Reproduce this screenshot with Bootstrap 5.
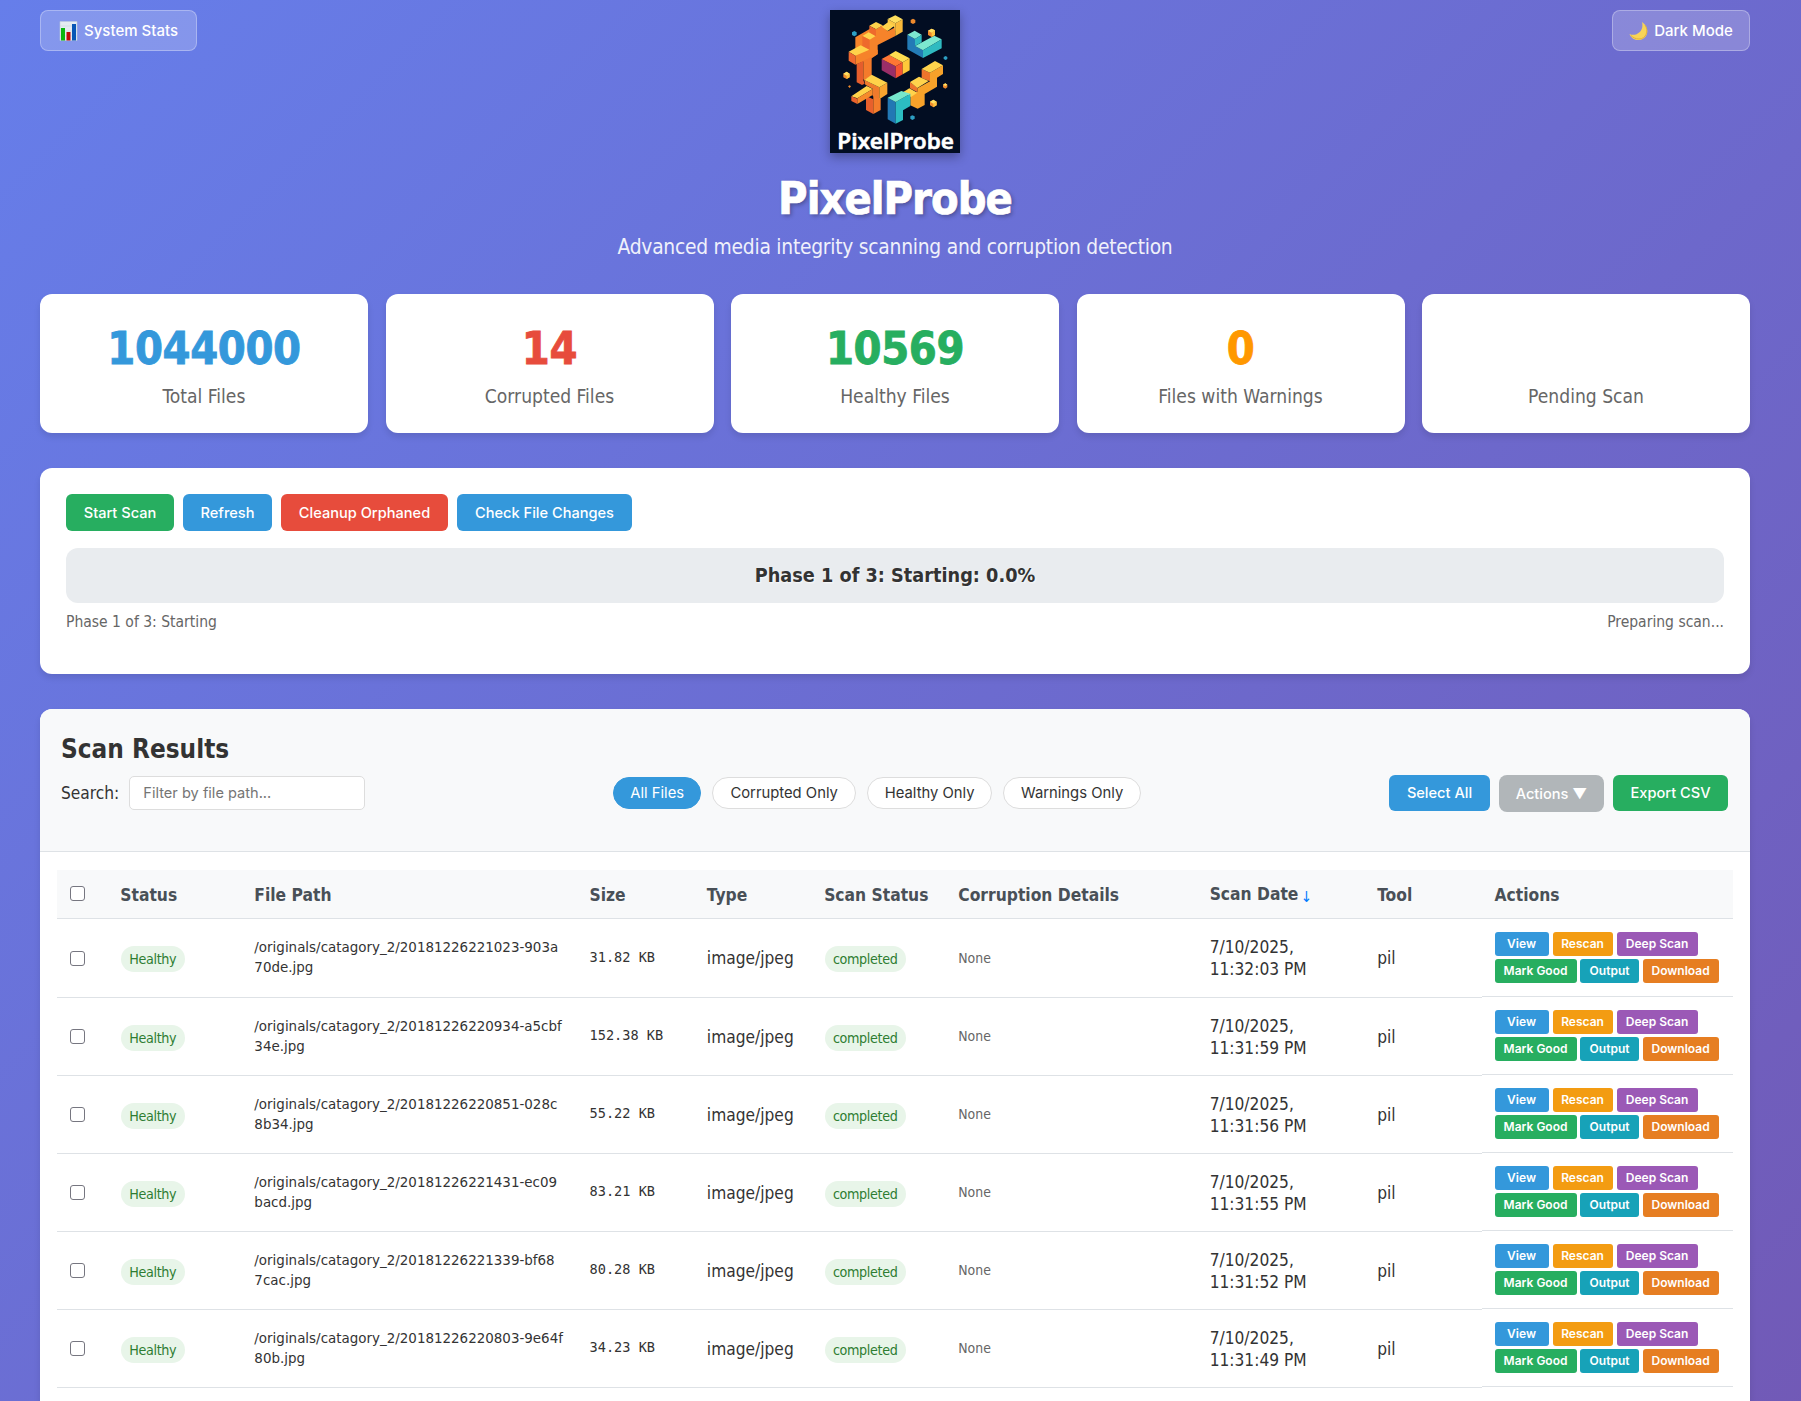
<!DOCTYPE html>
<html lang="en">
<head>
<meta charset="utf-8">
<title>PixelProbe</title>
<meta name="viewport" content="width=device-width, initial-scale=1">
<link href="https://cdn.jsdelivr.net/npm/bootstrap@5.3.0/dist/css/bootstrap.min.css" rel="stylesheet">
<style>
:root{--ui:Inter,"Liberation Sans",sans-serif;--txt:"DejaVu Sans Condensed","DejaVu Sans",sans-serif}
html,body{height:1401px;overflow:hidden}
body{font-family:var(--txt);font-stretch:condensed;font-size:17.2px;line-height:22px;color:#333;background:linear-gradient(135deg,#667eea 0%,#764ba2 100%) no-repeat;background-size:1801px 2700px}
.page{width:1710px;margin-left:40px}
.top-bar{padding-top:10px}
.side{width:400px}
.btn{font-family:var(--ui);font-weight:500;font-size:14.6px;line-height:20px;border:0;color:#fff!important;white-space:nowrap;padding:0}
.glass{height:41px;border:1px solid rgba(255,255,255,.3);background:rgba(255,255,255,.2);border-radius:8px;font-size:15px}
.glass svg{width:19px;height:20px;margin-right:6px}
.logo{width:130px;height:143px;box-shadow:0 4px 10px rgba(0,0,0,.3);display:block;overflow:visible}
.title{font-size:44.8px;font-weight:700;line-height:50px;letter-spacing:-1px;text-shadow:2px 2px 4px rgba(0,0,0,.3);margin:21px 0 0;-webkit-text-stroke:.7px #fff}
.sub{font-size:20.8px;line-height:28px;letter-spacing:-.25px;opacity:.9;margin:9px 0 0}
.panel{background:#fff;border:0;border-radius:12px;box-shadow:0 4px 6px rgba(0,0,0,.1)}
.stats{gap:17.5px;margin-top:33px}
.stat{flex:1 1 0;height:139px}
.num{font-size:44.8px;font-weight:700;line-height:54px;height:54px;margin-top:28px;letter-spacing:-.4px;-webkit-text-stroke:.8px currentColor}
.lbl{font-size:19.1px;color:#666;line-height:24px;margin-top:9px}
.controls{margin-top:35px;height:206px;padding:26px}
.act{height:37px;border-radius:6px}
.b-blue{background:#3498db!important}.b-green{background:#27ae60!important}.b-red{background:#e74c3c!important}.b-gray{background:#b1b6b9!important}
.b-orange{background:#f39c12!important}.b-purple{background:#9b59b6!important}.b-teal{background:#17a2b8!important}.b-dark{background:#e67e22!important}
.bar{height:55px;border-radius:12px;background:#e9ecef;margin-top:17px;font-size:19.7px;font-weight:700;text-shadow:1px 1px 2px rgba(255,255,255,.8)}
.phase{font-size:15.5px;color:#666;margin-top:8px}
.results{margin-top:35px;height:760px;overflow:hidden}
.rhead{height:143px;background:#f8f9fa;border-bottom:1px solid #dee2e6;padding:24px 22px 0 21px}
.rhead h2{font-size:25.9px;font-weight:700;line-height:32px;margin:0}
.tools{height:37px;margin-top:10px}
.find{width:236px;height:34px;margin-left:10px;font-family:var(--ui);font-size:14.6px;border:1px solid #ddd;border-radius:5px;padding:0 13px;color:#333}
.find::placeholder{color:#757575}
.lift{margin-bottom:2px}
.pill{height:32px;border-radius:16px;border:1px solid #ddd!important;background:#fff;color:#333!important;font-weight:400;font-size:14.8px}
.pill.on{background:#3498db;border-color:#3498db!important;color:#fff!important}
.grid{width:1676px;table-layout:fixed;margin:18px 0 0 17px;border-collapse:separate;border-spacing:0}
.grid th{height:49px;background:#f8f9fa;color:#495057;padding:1px 0 0 13px;border-bottom:1px solid #dee2e6;font-weight:700;white-space:nowrap;font-size:17.3px}
.grid th:first-child{padding:0 0 1px 13px}
.grid td{height:78px;padding:0 0 0 13px;border-bottom:1px solid #dee2e6;vertical-align:middle}
.grid tr:first-child td{height:79px}
.grid td.last,.grid tr:first-child td.last{padding:12px 0 0 13px;height:77px;vertical-align:top;display:block;margin-bottom:1px}
.grid tr:first-child td.last{padding-top:13px;height:78px}
.grid input{appearance:none;width:15px;height:15px;border:1px solid #767680;border-radius:3px;background:#fff;display:block;margin:0}
.arrow{color:#007bff;font-size:15px;font-weight:400;margin-left:-3px;display:inline-block;transform:translateY(2px)}
.tag{display:inline-block;height:26px;line-height:27px;border-radius:13px;background:#e8f5e9;color:#2e7d32;font-size:14.2px;letter-spacing:-.35px;text-align:center;margin-top:2px;margin-left:.5px;vertical-align:middle}
.grid .path{font-size:14.95px;line-height:20px;padding-bottom:2px}
.grid .size{font-family:"DejaVu Sans Mono",monospace;font-size:13.6px;padding-bottom:3px}
.grid .none{font-size:13.9px;color:#666;padding-bottom:1px}
.mini{height:24px;font-size:12px;font-weight:600;border-radius:3px;line-height:24px}
</style>
</head>
<body>
<div class="page">
 <header class="top-bar d-flex justify-content-between align-items-start">
  <div class="side"><button class="btn glass d-inline-flex align-items-center justify-content-center" style="width:157px"><svg viewBox="0 0 19 20"><path fill="#e4ebf2" stroke="#bccbdc" stroke-width=".6" d="M1 .5h17v19H1z"/><path stroke="#c5d2de" stroke-width=".5" d="M1 5h17M1 10h17M1 15h17"/><path fill="#0ab511" d="M2 7h4v12.5H2z"/><path fill="#c1090c" d="M7.500 11h4v8.500h-4z"/><path fill="#0756b5" d="M13 3h4v16.500h-4z"/></svg>System Stats</button></div>
  <svg class="logo" viewBox="0 0 390 429">
   <path fill="#020d22" d="M0 0h390v429H0z"/>
   <g transform="translate(-30 -30)">
    <!-- upper left arm -->
    <path fill="#f6832a" d="M168 88l19-12 16 18 23-12v26l-53 27v27l-18 11-49-6v-55l43-25z"/>
    <path fill="#f9b93a" d="M226 70l22-12v37l-22 13z"/>
    <path fill="#ffdf5e" d="M203 57l23-11 22 12-22 12z"/>
    <path fill="#fbc845" d="M203 57l23 13v24l-4-14-19-12z"/>
    <path fill="#ffd34c" d="M185 80l20-14 18 11-20 16zM148 77l20-11 20 10-20 12zM127 108l19-11 21 11-18 11z"/>
    <path fill="#ee6a2c" d="M148 77l20 11v21l-20-12zM127 108l22 11v32l-22-13z"/>
    <path fill="#f6832a" d="M106 167l42-18h25v14l-18 12-49 19z"/>
    <path fill="#ffd24a" d="M86 155l36-19 26 13-42 18z"/>
    <path fill="#ee6830" d="M86 155l20 12v27l-20-12z"/>
    <path fill="#e55d2c" d="M110 192l20-9v58l4 10-8 4-16-8z"/>
    <path fill="#f47b2b" d="M130 182l25-12v57l-22 14-3-4z"/>
    <!-- lower left arm -->
    <path fill="#e8602c" d="M138 288l22 10v44l-22-12z"/>
    <path fill="#f47d2b" d="M160 286l22 10v34l-22 12z"/>
    <path fill="#ef7a2c" d="M133 240l45 22v36l-20-10v-22l-22-12z"/>
    <path fill="#f9a52f" d="M178 262l24-14v34l-24 16z"/>
    <path fill="#ffd24a" d="M133 240l22-16 47 24-24 14zM94 289l46-31 18 9-46 28z"/>
    <path fill="#f68a2b" d="M112 295l46-28v18l-46 27z"/>
    <path fill="#ea622c" d="M94 289l18 7v16l-18-9z"/>
    <!-- centre cube -->
    <path fill="#9a2e68" d="M185 177l42 22v36l-42-24z"/>
    <path fill="#ff7634" d="M185 177l22-12 41 22-21 12z"/>
    <path fill="#ffdd50" d="M207 165l20-12 42 22-21 12z"/>
    <path fill="#f75432" d="M227 199l21-12v36l-21 12z"/>
    <path fill="#ffc93a" d="M248 187l21-12v36l-21 12z"/>
    <!-- teal blocks -->
    <path fill="#237bb6" d="M262 104l23 13v21l24 13v23l-47-26z"/>
    <path fill="#7ce8cf" d="M262 104l22-12 21 12-20 13zM285 138l58-31 22 11-56 33z"/>
    <path fill="#2fbac0" d="M285 117l20-13v23l-20 11zM309 151l56-33v27l-56 29z"/>
    <!-- lower right arm -->
    <path fill="#f7a22a" d="M330 218l39-22v26l-18 11v27l-37 22v33l-21 11-22-10v-28l21-13v-10l38-21z"/>
    <path fill="#ed742c" d="M305 207l25 11v26l-25-10zM270 246l22 17v14l-22-12z"/>
    <path fill="#ffd34c" d="M305 207l40-24 24 13-39 22zM270 246l27-16 29 13-34 21zM250 276l18-11 24 13-19 13z"/>
    <path fill="#2278b4" d="M203 293l24 13v65l-24-13z"/>
    <path fill="#2cbdc2" d="M227 306l44-25v37l-22 13v29l-22 11z"/>
    <path fill="#77e7cc" d="M203 293l41-20 27 8-44 25z"/>
    <!-- loose cubes -->
    <path fill="#ef8a2d" d="M272 60l7-4 7 4v8l-7 4-7-4zM324 92l11-6 10 5v14l-10 6-11-6zM70 221l10-6 9 6v11l-9 5-10-5zM330 305l10-6 10 6v11l-10 6-10-6zM369 254l7-4 6 4v8l-6 4-7-4zM84 259l5-3 4 3-4 5z"/>
    <path fill="#ffc53e" d="M335 98l10-7v14l-10 6zM80 227l9-6v11l-9 5zM340 311l10-6v11l-10 6z"/>
    <path fill="#2d9fc4" d="M96 97l7-4 7 4v8l-7 4-7-4zM371 171l6-3 5 3v6l-5 3-6-3zM271 349l6-3 7 3v7l-7 4-6-4z"/>
    <path fill="#ffe063" d="M324 92l11-6 10 5-10 7zM70 221l10-6 9 6-9 6zM330 305l10-6 10 6-10 6zM369 254l7-4 6 4-6 4z"/>
   </g>
   <text x="197" y="417" text-anchor="middle" textLength="350" lengthAdjust="spacingAndGlyphs" fill="#fff" stroke="#fff" stroke-width="1.5" font-family="Noto Sans, sans-serif" font-weight="600" font-size="65">PixelProbe</text></svg>
  <div class="side text-end"><button class="btn glass d-inline-flex align-items-center justify-content-center" style="width:138px"><svg viewBox="0 0 19 20"><path fill="#f8d457" d="M13 1c8 5 7 17-3 18-5 .4-8-2.500-9.500-6 6 3 15-2 12.500-12z"/><path fill="none" stroke="#dca936" stroke-width=".8" d="M16 4c4 6 1 14-6 14-3.500 0-6-1.500-8-3.500"/></svg>Dark Mode</button></div>
 </header>
 <div class="text-center text-white"><h1 class="title">PixelProbe</h1><p class="sub">Advanced media integrity scanning and corruption detection</p></div>
 <section class="stats d-flex text-center">
  <div class="stat panel"><div class="num" style="color:#3498db">1044000</div><div class="lbl">Total Files</div></div>
  <div class="stat panel"><div class="num" style="color:#e74c3c">14</div><div class="lbl">Corrupted Files</div></div>
  <div class="stat panel"><div class="num" style="color:#27ae60">10569</div><div class="lbl">Healthy Files</div></div>
  <div class="stat panel"><div class="num" style="color:#ff9800">0</div><div class="lbl">Files with Warnings</div></div>
  <div class="stat panel"><div class="num"></div><div class="lbl">Pending Scan</div></div>
 </section>
 <section class="controls panel">
  <div class="d-flex" style="gap:9px"><button class="btn act b-green" style="width:108px">Start Scan</button><button class="btn act b-blue" style="width:89px">Refresh</button><button class="btn act b-red" style="width:167px">Cleanup Orphaned</button><button class="btn act b-blue" style="width:175px">Check File Changes</button></div>
  <div class="bar d-flex align-items-center justify-content-center">Phase 1 of 3: Starting: 0.0%</div>
  <div class="phase d-flex justify-content-between"><span>Phase 1 of 3: Starting</span><span>Preparing scan...</span></div>
 </section>
 <section class="results panel">
  <div class="rhead"><h2>Scan Results</h2>
   <div class="tools d-flex justify-content-between align-items-center">
    <div class="lift d-flex align-items-center">Search:<input class="find" placeholder="Filter by file path..."></div>
    <div class="lift d-flex" style="gap:11px"><button class="btn pill on" style="width:88px">All Files</button><button class="btn pill" style="width:144px">Corrupted Only</button><button class="btn pill" style="width:125px">Healthy Only</button><button class="btn pill" style="width:138px">Warnings Only</button></div>
    <div class="d-flex" style="gap:9px"><button class="btn act b-blue" style="width:101px;height:36px">Select All</button><button class="btn act b-gray" style="width:105px;border-radius:8px">Actions ▼</button><button class="btn act b-green" style="width:115px;height:36px">Export CSV</button></div>
   </div>
  </div>
  <table class="grid">
   <colgroup><col style="width:3%"><col style="width:8%"><col style="width:20%"><col style="width:7%"><col style="width:7%"><col style="width:8%"><col style="width:15%"><col style="width:10%"><col style="width:7%"><col style="width:15%"></colgroup>
   <thead><tr><th><input type="checkbox"></th><th>Status</th><th>File Path</th><th>Size</th><th>Type</th><th>Scan Status</th><th>Corruption Details</th><th>Scan Date <span class="arrow">↓</span></th><th>Tool</th><th>Actions</th></tr></thead>
   <tbody id="rows"></tbody>
  </table>
 </section>
</div>
<script>
const files=[["20181226221023-903a","70de","31.82","32:03"],["20181226220934-a5cbf","34e","152.38","31:59"],["20181226220851-028c","8b34","55.22","31:56"],["20181226221431-ec09","bacd","83.21","31:55"],["20181226221339-bf68","7cac","80.28","31:52"],["20181226220803-9e64f","80b","34.23","31:49"]];
document.getElementById("rows").innerHTML=files.map(f=>`<tr><td><input type="checkbox"></td><td><span class="tag" style="width:64px">Healthy</span></td><td class="path">/originals/catagory_2/${f[0]}<br>${f[1]}.jpg</td><td class="size">${f[2]} KB</td><td>image/jpeg</td><td><span class="tag" style="width:81px">completed</span></td><td class="none">None</td><td>7/10/2025,<br>11:${f[3]} PM</td><td>pil</td><td class="last"><div class="d-flex" style="gap:4px"><button class="btn mini b-blue" style="width:54px">View</button><button class="btn mini b-orange" style="width:60px">Rescan</button><button class="btn mini b-purple" style="width:81px">Deep Scan</button></div><div class="d-flex" style="gap:3.500px;margin-top:3px"><button class="btn mini b-green" style="width:82px">Mark Good</button><button class="btn mini b-teal" style="width:59px">Output</button><button class="btn mini b-dark" style="width:76px">Download</button></div></td></tr>`).join("");
</script>
<script src="https://cdn.jsdelivr.net/npm/bootstrap@5.3.0/dist/js/bootstrap.bundle.min.js"></script>
</body>
</html>
